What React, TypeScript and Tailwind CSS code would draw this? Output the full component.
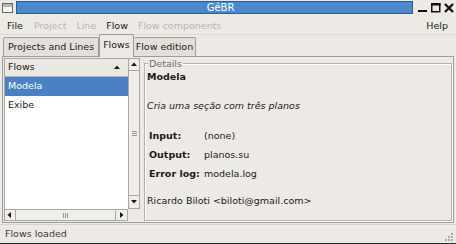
import React from "react";

const font = { fontFamily: '"DejaVu Sans", "Liberation Sans", sans-serif' };

function Arrow({ dir }: { dir: "up" | "down" | "left" | "right" }) {
  const pts: Record<string, string> = {
    up: "1,5 4,1.5 7,5",
    down: "1,2 4,5.5 7,2",
    left: "5,1 1.5,4 5,7",
    right: "2,1 5.5,4 2,7",
  };
  return (
    <svg width="8" height="8" viewBox="0 0 8 8">
      <polygon points={pts[dir]} fill="#1a1a1a" />
    </svg>
  );
}

export default function App() {
  return (
    <div
      className="w-[456px] h-[244px] bg-[#edeae5] flex flex-col text-[9.5px] text-[#1a1a1a] overflow-hidden border-b border-[#2a2a2a]"
      style={font}
    >
      {/* Title bar */}
      <div className="h-[15px] flex items-center pl-[2px] pr-[2px] gap-[3px]">
        <div className="w-[11px] h-[10px] border border-[#6a6a6a] bg-[#f4f4f4] flex flex-col">
          <div className="h-[3px] bg-[#b8b8b8]" />
        </div>
        <div className="flex-1 h-[13px] bg-[#4c88cc] border border-[#2d5b93] flex items-center justify-center pl-[12px]">
          <span className="text-white text-[10px] leading-none">GêBR</span>
        </div>
        <div className="flex items-center gap-[3px] pl-[2px]">
          <svg width="10" height="10" viewBox="0 0 10 10">
            <rect x="0" y="7" width="9" height="2" fill="#111" />
          </svg>
          <svg width="10" height="10" viewBox="0 0 10 10">
            <rect x="0.75" y="0.75" width="8" height="8" fill="none" stroke="#111" strokeWidth="1.5" />
            <rect x="0" y="0" width="9.5" height="2.5" fill="#111" />
          </svg>
          <svg width="10" height="10" viewBox="0 0 10 10">
            <path d="M1 1 L9 9 M9 1 L1 9" stroke="#111" strokeWidth="2.4" />
          </svg>
        </div>
      </div>

      {/* Menu bar */}
      <div className="h-[20px] flex items-center pt-[3px] pl-[2px] pr-[3px] border-b border-[#dcd9d3]">
        <span className="pl-[5px] pr-[6px]">File</span>
        <span className="px-[5px] text-[#b9b6af]">Project</span>
        <span className="px-[5px] text-[#b9b6af]">Line</span>
        <span className="px-[5px]">Flow</span>
        <span className="px-[5px] text-[#b9b6af]">Flow components</span>
        <span className="ml-auto px-[5px]">Help</span>
      </div>

      {/* Tabs */}
      <div className="h-[21px] flex items-end pl-[3px] relative z-10">
        <div className="h-[19px] px-[4px] flex items-center bg-[#e3e0da] border border-b-0 border-[#9e9c98] rounded-t-[2px]">
          Projects and Lines
        </div>
        <div className="h-[23px] px-[3px] flex items-center bg-[#edeae5] border border-b-0 border-[#9e9c98] rounded-t-[2px] -mb-[1px] pb-[1px]">
          Flows
        </div>
        <div className="h-[19px] px-[2px] flex items-center bg-[#e3e0da] border border-b-0 border-l-0 border-[#9e9c98] rounded-t-[2px]">
          Flow edition
        </div>
      </div>

      {/* Notebook page */}
      <div className="h-[167px] mx-[2px] border border-[#9e9c98] flex p-[1px] gap-0">
        {/* Left pane */}
        <div className="w-[136px] flex flex-col">
          <div className="flex flex-1">
            {/* tree */}
            <div className="w-[124px] bg-white flex flex-col border-l border-t border-[#a9a7a2]">
              <div className="h-[18px] flex items-center pl-[3px] pr-[7px] bg-[#ebe8e3] border-b border-[#b5b3ae]">
                <span>Flows</span>
                <span className="ml-auto">
                  <Arrow dir="up" />
                </span>
              </div>
              <div className="h-[19px] flex items-center pl-[3px] bg-[#4a80c4] text-white">Modela</div>
              <div className="h-[18px] flex items-center pl-[3px]">Exibe</div>
            </div>
            {/* vertical scrollbar */}
            <div className="w-[12px] flex flex-col bg-[#d9d6d0] border border-[#a9a7a2]">
              <div className="h-[12px] flex items-center justify-center bg-[#f0eeea] border-b border-[#a9a7a2] rounded-t-[2px]">
                <Arrow dir="up" />
              </div>
              <div className="flex-1 bg-[#f0eeea] border-b border-[#a9a7a2] flex items-center justify-center">
                <div className="flex flex-col gap-[1px]">
                  <div className="w-[5px] h-[1px] bg-[#9a9893]" />
                  <div className="w-[5px] h-[1px] bg-[#9a9893]" />
                  <div className="w-[5px] h-[1px] bg-[#9a9893]" />
                </div>
              </div>
              <div className="h-[12px] flex items-center justify-center bg-[#f0eeea] rounded-b-[2px]">
                <Arrow dir="down" />
              </div>
            </div>
          </div>
          {/* horizontal scrollbar */}
          <div className="h-[12px] flex">
            <div className="w-[124px] flex bg-[#d9d6d0] border border-[#a9a7a2]">
              <div className="w-[11px] flex items-center justify-center bg-[#f0eeea] border-r border-[#a9a7a2]">
                <Arrow dir="left" />
              </div>
              <div className="flex-1 bg-[#f0eeea] border-r border-[#a9a7a2] flex items-center justify-center">
                <div className="flex gap-[1px]">
                  <div className="w-[1px] h-[5px] bg-[#9a9893]" />
                  <div className="w-[1px] h-[5px] bg-[#9a9893]" />
                  <div className="w-[1px] h-[5px] bg-[#9a9893]" />
                </div>
              </div>
              <div className="w-[11px] flex items-center justify-center bg-[#f0eeea]">
                <Arrow dir="right" />
              </div>
            </div>
            <div className="w-[12px]" />
          </div>
        </div>

        {/* pane handle */}
        <div className="w-[4px]" />

        {/* Right pane: Details frame */}
        <div className="flex-1 relative pt-[5px]">
          <div className="h-full border border-[#b3b1ab] shadow-[inset_1px_1px_0_#ffffff,1px_1px_0_#ffffff] pl-[2px] pt-[7px]">
            <div className="font-bold leading-[12px]">Modela</div>
            <div className="italic mt-[17px] leading-[12px]">Cria uma seção com três planos</div>
            <div className="mt-[18px] pl-[2px] grid grid-cols-[55px_1fr] gap-y-[7px] leading-[12px]">
              <span className="font-bold">Input:</span>
              <span>(none)</span>
              <span className="font-bold">Output:</span>
              <span>planos.su</span>
              <span className="font-bold">Error log:</span>
              <span>modela.log</span>
            </div>
            <div className="mt-[15px] leading-[12px]">Ricardo Biloti &lt;biloti@gmail.com&gt;</div>
          </div>
          <div className="absolute left-[4px] top-0 px-[1px] bg-[#edeae5] text-[#6f6d68] leading-[11px]">Details</div>
        </div>
      </div>

      {/* Status bar */}
      <div className="flex-1 flex items-center pl-[5px] mt-[1px] border-t border-[#d6d3cd] relative text-[#3a3a3a]">
        Flows loaded
        <svg className="absolute right-[2px] bottom-[1px]" width="12" height="10" viewBox="0 0 12 10">
          <g fill="#b0ada7">
            <rect x="9" y="1" width="2" height="2" />
            <rect x="6" y="4" width="2" height="2" />
            <rect x="9" y="4" width="2" height="2" />
            <rect x="3" y="7" width="2" height="2" />
            <rect x="6" y="7" width="2" height="2" />
            <rect x="9" y="7" width="2" height="2" />
          </g>
        </svg>
      </div>
    </div>
  );
}
